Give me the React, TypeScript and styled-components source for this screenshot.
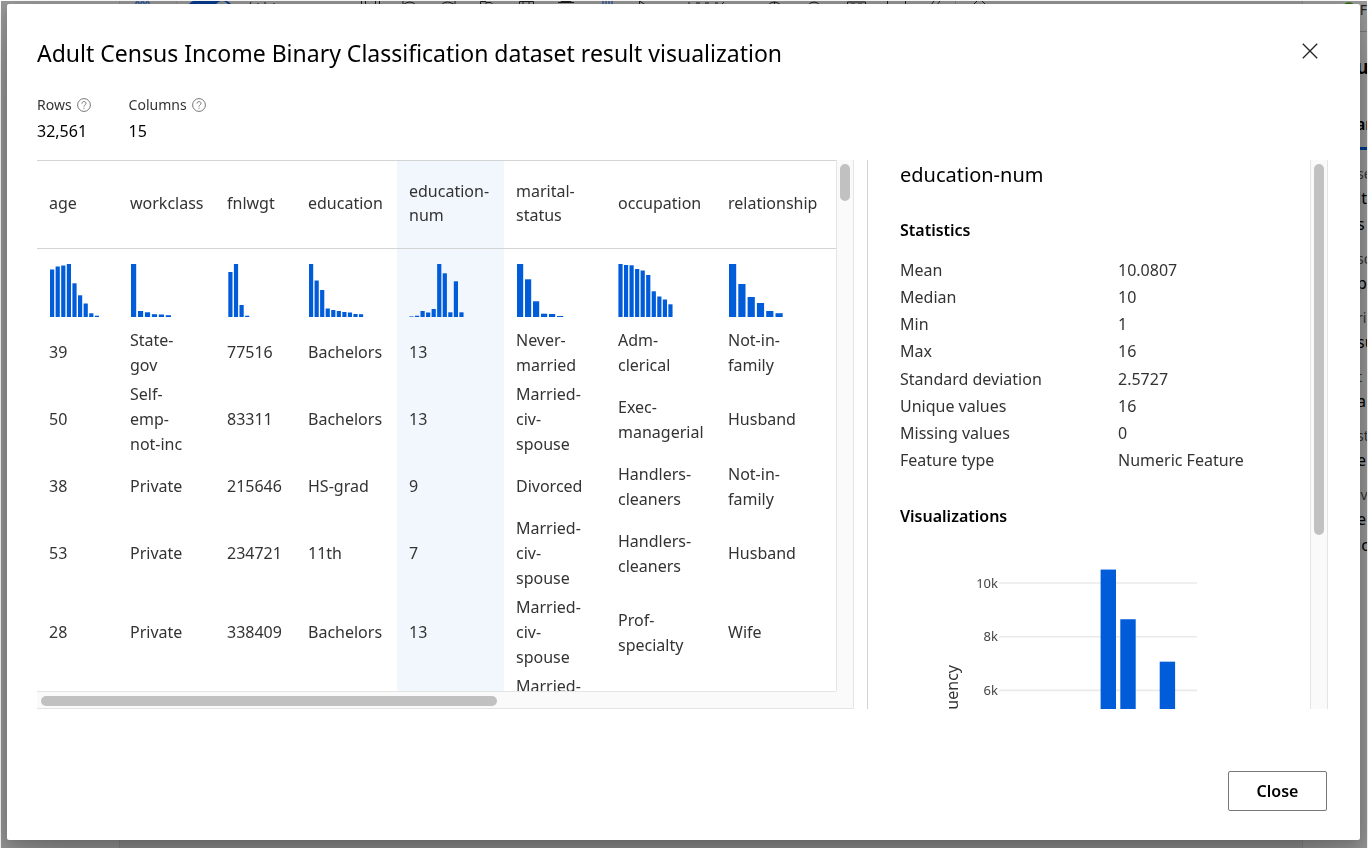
import React from "react";
import styled, { createGlobalStyle, css } from "styled-components";

const BLUE = "#015cda";

const GlobalStyle = createGlobalStyle`
  *, *::before, *::after { box-sizing: border-box; }
  body {
    margin: 0;
    background: #fff;
    color: #333;
    font: 16px/24px "Noto Sans", "Open Sans", sans-serif;
    overflow: hidden;
  }
  h2, h3, h4, dl, dd, p { margin: 0; font-weight: 400; }
  button { font: inherit; color: inherit; cursor: pointer; }
  svg { display: block; }
`;

/* ---------- studio page behind the dialog ---------- */

const Studio = styled.div`
  height: 100vh;
  padding: 1px 1px 0;
  display: flex;
`;

const StudioBody = styled.div`
  flex: 1;
  min-width: 0;
  display: flex;
  background: #999;
  overflow: hidden;
`;

const Nav = styled.nav`
  width: 119px;
  flex: none;
  border-right: 1px solid #888;
`;

const Canvas = styled.div`
  flex: 1;
  min-width: 0;
  background: #949494;
`;

const Toolbar = styled.div`
  display: flex;
  height: 40px;
  overflow: hidden;
`;

const Tool = styled.div<{ $lead: number; $width: number }>`
  flex: none;
  width: ${(p) => p.$width}px;
  margin-left: ${(p) => p.$lead}px;
`;

const Settings = styled.aside`
  width: 65px;
  flex: none;
  border-left: 1px solid #888;
  overflow: hidden;
  white-space: nowrap;
`;

const SettingsStatus = styled.div`
  display: flex;
  gap: 4px;
  height: 31px;
  padding-left: 39px;
  border-bottom: 1px solid #777;
  line-height: 18px;
  font-size: 14px;
  color: #222;
`;

const SettingsTitle = styled.div`
  height: 80px;
  padding: 20px 0 0 53px;
  color: #000;
  font-size: 20px;
  font-weight: 700;
  line-height: 30px;
`;

const SettingsTab = styled.div`
  height: 38px;
  padding-left: 53px;
  border-bottom: 3px solid #003a8c;
  color: #000;
  font-weight: 600;
  line-height: 24px;
`;

const SettingsList = styled.div`
  padding: 2px 0 0 54px;
`;

const SettingsField = styled.div`
  padding-top: 11px;
  color: #000;
  line-height: 26px;
`;

const SettingsLabel = styled.div`
  color: #333;
  font-size: 14px;
  line-height: 22px;
`;

/* ---------- dialog ---------- */

const Dialog = styled.section`
  position: fixed;
  inset: 4px 8px 8px 7px;
  display: flex;
  flex-direction: column;
  padding: 30px 32px 29px 30px;
  background: #fff;
  border-radius: 2px;
  box-shadow: 0 26px 58px rgba(0, 0, 0, 0.22), 0 5px 14px rgba(0, 0, 0, 0.18);
`;

const DialogHeader = styled.header`
  display: flex;
  justify-content: space-between;
  height: 59px;
`;

const Title = styled.h2`
  color: #000;
  font-size: 23px;
  line-height: 38px;
`;

const DismissButton = styled.button`
  width: 36px;
  height: 34px;
  padding: 0;
  display: grid;
  place-items: center;
  border: 0;
  background: none;
`;

const Counts = styled.dl`
  display: flex;
  gap: 38px;
  height: 67px;
`;

const CountLabel = styled.dt`
  display: flex;
  align-items: center;
  gap: 5px;
  font-size: 14px;
  line-height: 24px;
`;

const CountValue = styled.dd`
  color: #000;
  line-height: 28px;
`;

const Content = styled.div`
  flex: 1;
  min-height: 0;
  display: flex;
  gap: 13px;
`;

const GridScroller = styled.div`
  flex: 1;
  min-width: 0;
  display: grid;
  grid-template-columns: minmax(0, 1fr) 18px;
  grid-template-rows: minmax(0, 1fr) 18px;
`;

const GridView = styled.div`
  overflow: hidden;
  border-top: 1px solid #d4d4d4;
`;

const trackLine = "1px solid #e4e4e4";

const VerticalTrack = styled.div`
  width: 18px;
  padding: 4px 3px;
  background: #fafafa;
  border-left: ${trackLine};
  border-right: ${trackLine};
`;

const HorizontalTrack = styled.div`
  padding: 4px 4px 2px;
  background: #fafafa;
  border-top: ${trackLine};
  border-bottom: ${trackLine};
`;

const TrackCorner = styled.div`
  background: #fafafa;
  border-right: ${trackLine};
  border-bottom: ${trackLine};
`;

const Thumb = styled.div<{ $vertical?: boolean; $share: number }>`
  border-radius: 5px;
  background: #c1c1c1;
  ${(p) =>
    p.$vertical
      ? css`width: 10px; height: ${p.$share}%;`
      : css`height: 10px; width: ${p.$share}%;`}
`;

const DataTable = styled.table`
  width: 100%;
  table-layout: fixed;
  border-collapse: separate;
  border-spacing: 0;
  text-align: left;
  white-space: pre;
`;

const cell = css<{ $selected?: boolean }>`
  padding: 0 12px;
  background: ${(p) => (p.$selected ? "#f2f7fe" : "transparent")};
`;

const HeadCell = styled.th<{ $selected?: boolean }>`
  ${cell}
  height: 88px;
  padding-bottom: 3px;
  border-bottom: 1px solid #d4d4d4;
  font-weight: 400;
  line-height: 24px;
`;

const SparkCell = styled.td<{ $selected?: boolean }>`
  ${cell}
  height: 76px;
  padding-top: 15px;
  vertical-align: top;
`;

const Cell = styled.td<{ $selected?: boolean; $tall: boolean }>`
  ${cell}
  height: ${(p) => (p.$tall ? 79 : 55)}px;
  line-height: 25px;
`;

const Details = styled.aside`
  width: 461px;
  flex: none;
  display: flex;
  border-left: 1px solid #d4d4d4;
`;

const DetailsBody = styled.div`
  flex: 1;
  min-width: 0;
  padding-left: 32px;
  overflow: hidden;
`;

const FeatureName = styled.h3`
  color: #000;
  font-size: 20px;
  line-height: 30px;
`;

const SectionTitle = styled.h4<{ $gap: number }>`
  margin-top: ${(p) => p.$gap}px;
  color: #000;
  font-weight: 600;
  line-height: 24px;
`;

const Stats = styled.dl`
  display: grid;
  grid-template-columns: 218px 1fr;
  grid-auto-rows: 1fr;
  align-items: center;
  height: 218px;
  margin-top: 14px;
`;

const ChartArea = styled.div`
  margin-top: 12px;
`;

const ChartText = styled.text`
  fill: #444;
  font-size: 13px;
`;

const AxisTitle = styled.text`
  fill: #333;
  font-size: 16px;
`;

const Footer = styled.footer`
  display: flex;
  justify-content: flex-end;
  padding: 62px 1px 0 0;
`;

const CloseButton = styled.button`
  width: 99px;
  height: 40px;
  border: 1px solid #777;
  border-radius: 2px;
  background: #fff;
  color: #000;
  font-weight: 600;
`;

/* ---------- data ---------- */

type Column = { name: string; width?: number; step: number; bar: number; inset: number; bars: number[] };

const columns: Column[] = [
  { name: "age", width: 81, step: 5.6, bar: 4, inset: 1, bars: [47.5, 50.5, 51.5, 53, 33.7, 21.7, 13.5, 3.7, 1.3] },
  { name: "workclass", width: 97, step: 6.95, bar: 5, inset: 1, bars: [53, 6, 4.7, 2.8, 2.5, 1.8] },
  { name: "fnlwgt", width: 81, step: 5.6, bar: 4, inset: 1.3, bars: [45, 53, 12, 1.3] },
  { name: "education", width: 101, step: 5.55, bar: 4, inset: 1, bars: [53, 36.5, 27, 8.5, 7, 6, 5, 4.5, 3, 2.8] },
  { name: "education-\nnum", width: 107, step: 5.55, bar: 4, inset: 0.4, bars: [0.6, 1.3, 6, 4.5, 8, 53, 43.7, 4.7, 35.7, 4.7] },
  { name: "marital-\nstatus", width: 102, step: 8, bar: 6, inset: 1, bars: [53, 37.7, 15.7, 3.3, 3, 1] },
  { name: "occupation", width: 110, step: 5.55, bar: 4, inset: 0.4, bars: [53, 52, 51.7, 48, 46.5, 42, 25.7, 20.5, 17.5, 12.7] },
  { name: "relationship", step: 9.3, bar: 7, inset: 1, bars: [53, 33, 20, 14, 6, 3.8] },
];

const SELECTED = 4;

const rows: string[][] = [
  ["39", "State-\ngov", "77516", "Bachelors", "13", "Never-\nmarried", "Adm-\nclerical", "Not-in-\nfamily"],
  ["50", "Self-\nemp-\nnot-inc", "83311", "Bachelors", "13", "Married-\nciv-\nspouse", "Exec-\nmanagerial", "Husband"],
  ["38", "Private", "215646", "HS-grad", "9", "Divorced", "Handlers-\ncleaners", "Not-in-\nfamily"],
  ["53", "Private", "234721", "11th", "7", "Married-\nciv-\nspouse", "Handlers-\ncleaners", "Husband"],
  ["28", "Private", "338409", "Bachelors", "13", "Married-\nciv-\nspouse", "Prof-\nspecialty", "Wife"],
  ["37", "Private", "284582", "Masters", "14", "Married-\nciv-\nspouse", "Exec-\nmanagerial", "Wife"],
];

const stats: [string, string][] = [
  ["Mean", "10.0807"],
  ["Median", "10"],
  ["Min", "1"],
  ["Max", "16"],
  ["Standard deviation", "2.5727"],
  ["Unique values", "16"],
  ["Missing values", "0"],
  ["Feature type", "Numeric Feature"],
];

const settingsFields: [string, string[]][] = [
  ["se", ["lt", "s"]],
  ["so", ["pa"]],
  ["ri", ["su"]],
  ["t", ["aF"]],
  ["st", ["e"]],
  ["iv", ["e", "ic"]],
];

/* ---------- drawings ---------- */

const HelpIcon = () => (
  <svg width="14" height="14" viewBox="0 0 14 14" fill="none" stroke="#777" aria-hidden="true">
    <circle cx="7" cy="7" r="6.4" />
    <path d="M5 5.6C5 4.3 5.8 3.6 7 3.6s2 .7 2 1.8c0 1.500-2 1.600-2 3.200" />
    <path d="M7 9.700v1.100" />
  </svg>
);

const DismissIcon = () => (
  <svg width="16" height="16" viewBox="0 0 16 16" stroke="#222" strokeWidth="1.3" aria-hidden="true">
    <path d="M.8.8l14.400 14.400M15.200.8L.8 15.200" />
  </svg>
);

const StatusDot = () => (
  <svg width="16" height="16" viewBox="0 0 16 16">
    <circle cx="8" cy="8" r="8" fill="#2c6b00" />
  </svg>
);

const Sparkline = ({ column }: { column: Column }) => (
  <svg width="60" height="53" fill={BLUE} aria-hidden="true">
    {column.bars.map((h, i) => (
      <rect key={i} x={column.inset + i * column.step} y={53 - h} width={column.bar + 0.2} height={h} />
    ))}
  </svg>
);

const frequencies = [0.2, 0.5, 1.2, 0.9, 1.7, 10.5, 8.65, 0.95, 7.07, 0.95];

const FrequencyChart = () => (
  <svg width="300" height="340" role="img" aria-label="Frequency of education-num">
    {[10, 8, 6, 4, 2, 0].map((k, i) => (
      <g key={k}>
        <path d={`M99 ${43 + i * 53.7}H297`} stroke="#eaeaea" strokeWidth="1.6" />
        <ChartText x="98" y={47.5 + i * 53.7} textAnchor="end">{k ? `${k}k` : "0"}</ChartText>
      </g>
    ))}
    {frequencies.map((f, i) => (
      <rect key={i} x={102.1 + i * 19.7} y={311.5 - f * 26.85} width="15.4" height={f * 26.85} fill={BLUE} />
    ))}
    <AxisTitle transform="translate(58 125) rotate(-90)" textAnchor="end">Frequency</AxisTitle>
  </svg>
);

/* Tools of the canvas toolbar: space before, width, drawing. */
const ink = "#1c1c1c";
const tools: [number, number, React.ReactNode][] = [
  [15, 16, <path d="M1 3V1h3v2M6 3V1h3v2M11 3V1h3v2" stroke="#0a3f94" fill="none" />],
  [25, 1, <path d="M.5 0v20" stroke="#888" />],
  [9, 48, <g><rect width="48" height="24" y="-1" rx="12" fill="#083a8b" /><circle cx="36" cy="7" r="7" fill="#8c8c8c" /></g>],
  [14, 34, <path d="M2 3l1-2M10 3V2M17 3V1M26 3V2" stroke={ink} />],
  [79, 20, <path d="M.5 0v9h4V0M14.500 0v9h4V0" stroke={ink} fill="none" />],
  [21, 15, <path d="M1 0v4h5M1 4q7-6 13 0" stroke={ink} fill="none" />],
  [23, 16, <path d="M15 0v4h-5M15 4Q7-2 1 4" stroke={ink} fill="none" />],
  [24, 16, <path d="M.5 12V.5H6M6 12V1.500h5l3 3" stroke={ink} fill="none" />],
  [23, 16, <path d="M.5 12V.5h14V12M4 0v4h6V0" stroke={ink} fill="none" />],
  [23, 17, <path d="M0 1.500h16M3 2V.5h10V2" stroke={ink} fill="none" />],
  [27, 14, <path d="M1 0v9M4 0v9M7 0v9M10 0v9" stroke="#0a3f94" />],
  [23, 10, <path d="M.5 8V0l6 4" stroke={ink} fill="none" />],
  [38, 38, <path d="M2 3V1M9 2h4M18 2h4M28 2h3M35 3l2-2" stroke={ink} />],
  [42, 16, <path d="M1 4q6-6 13 0M7.500 1v6" stroke={ink} fill="none" />],
  [24, 14, <path d="M1 4q6-6 12 0" stroke={ink} fill="none" />],
  [26, 20, <path d="M.5 9V1h18v8M4 3h4M11 3h4" stroke={ink} fill="none" />],
  [20, 1, <path d="M.5 0v20" stroke={ink} />],
  [17, 1, <path d="M.5 0v20" stroke={ink} />],
  [25, 12, <path d="M0 4l3-4M6 4l3-4" stroke={ink} />],
  [12, 1, <path d="M.5 0v20" stroke="#777" />],
  [16, 16, <path d="M1 4l4-4M10 0l4 4" stroke={ink} />],
];

export default function App() {
  return (
    <>
      <GlobalStyle />
      <Studio>
        <StudioBody aria-hidden="true">
          <Nav />
          <Canvas>
            <Toolbar>
              {tools.map(([lead, width, art], i) => (
                <Tool key={i} $lead={lead} $width={width}>
                  <svg width={width} height="20">{art}</svg>
                </Tool>
              ))}
            </Toolbar>
          </Canvas>
          <Settings>
            <SettingsStatus><StatusDot />F</SettingsStatus>
            <SettingsTitle>u</SettingsTitle>
            <SettingsTab>ar</SettingsTab>
            <SettingsList>
              {settingsFields.map(([label, values]) => (
                <SettingsField key={label}>
                  <SettingsLabel>{label}</SettingsLabel>
                  {values.map((v) => <div key={v}>{v}</div>)}
                </SettingsField>
              ))}
            </SettingsList>
          </Settings>
        </StudioBody>
      </Studio>

      <Dialog role="dialog" aria-labelledby="dialog-title">
        <DialogHeader>
          <Title id="dialog-title">Adult Census Income Binary Classification dataset result visualization</Title>
          <DismissButton aria-label="Dismiss"><DismissIcon /></DismissButton>
        </DialogHeader>

        <Counts>
          <div>
            <CountLabel>Rows <HelpIcon /></CountLabel>
            <CountValue>32,561</CountValue>
          </div>
          <div>
            <CountLabel>Columns <HelpIcon /></CountLabel>
            <CountValue>15</CountValue>
          </div>
        </Counts>

        <Content>
          <GridScroller>
            <GridView>
              <DataTable>
                <colgroup>
                  {columns.map((c) => <col key={c.name} width={c.width} />)}
                </colgroup>
                <thead>
                  <tr>
                    {columns.map((c, i) => (
                      <HeadCell key={c.name} scope="col" $selected={i === SELECTED}>{c.name}</HeadCell>
                    ))}
                  </tr>
                </thead>
                <tbody>
                  <tr>
                    {columns.map((c, i) => (
                      <SparkCell key={c.name} $selected={i === SELECTED}><Sparkline column={c} /></SparkCell>
                    ))}
                  </tr>
                  {rows.map((row) => {
                    const tall = row.some((v) => v.split("\n").length > 2);
                    return (
                      <tr key={row[2]}>
                        {row.map((v, i) => (
                          <Cell key={i} $tall={tall} $selected={i === SELECTED}>{v}</Cell>
                        ))}
                      </tr>
                    );
                  })}
                </tbody>
              </DataTable>
            </GridView>
            <VerticalTrack><Thumb $vertical $share={7} /></VerticalTrack>
            <HorizontalTrack><Thumb $share={57.6} /></HorizontalTrack>
            <TrackCorner />
          </GridScroller>

          <Details>
            <DetailsBody>
              <FeatureName>education-num</FeatureName>
              <SectionTitle $gap={28}>Statistics</SectionTitle>
              <Stats>
                {stats.map(([k, v]) => (
                  <React.Fragment key={k}>
                    <dt>{k}</dt>
                    <dd>{v}</dd>
                  </React.Fragment>
                ))}
              </Stats>
              <SectionTitle $gap={30}>Visualizations</SectionTitle>
              <ChartArea><FrequencyChart /></ChartArea>
            </DetailsBody>
            <VerticalTrack><Thumb $vertical $share={68.6} /></VerticalTrack>
          </Details>
        </Content>

        <Footer><CloseButton>Close</CloseButton></Footer>
      </Dialog>
    </>
  );
}
